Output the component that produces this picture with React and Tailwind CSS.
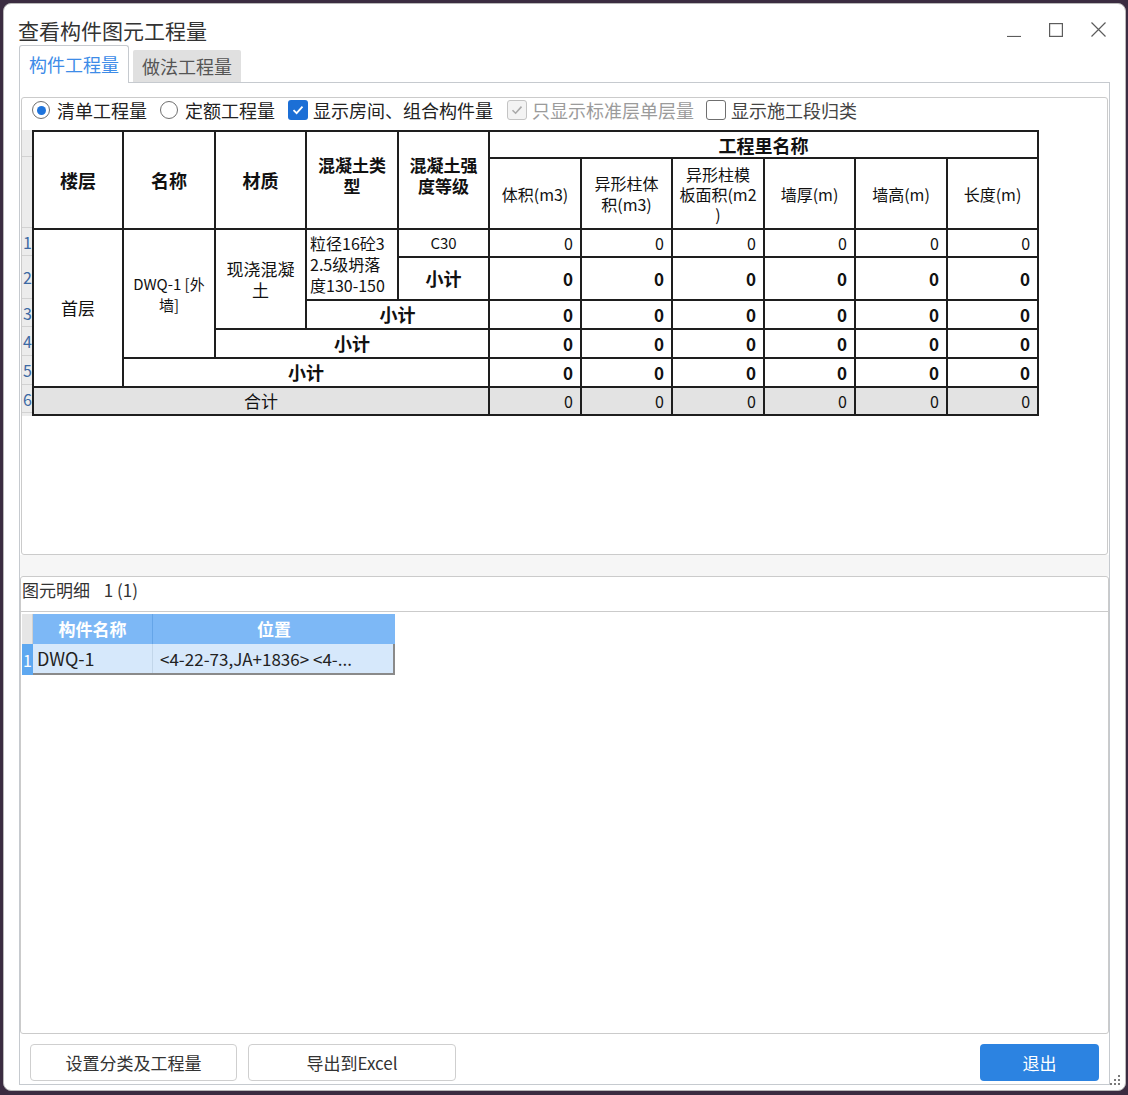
import React from 'react'

const font = "font-['Noto_Sans_CJK_SC','Noto_Sans',sans-serif]"

function Radio({ checked }) {
    return (
        <span className="w-[18px] h-[18px] rounded-full border border-[#6f6f6f] bg-white flex items-center justify-center shrink-0">
            {checked && <span className="w-[9px] h-[9px] rounded-full bg-[#1f74dc]" />}
        </span>
    )
}

function Check({ checked, disabled }) {
    if (disabled) {
        return (
            <span className="w-[20px] h-[20px] rounded-[3px] border border-[#c4c4c4] bg-[#f3f3f3] flex items-center justify-center shrink-0">
                <svg width="14" height="14" viewBox="0 0 14 14"><path d="M2.5 7.2 L5.6 10.2 L11.5 3.6" fill="none" stroke="#a9a9a9" strokeWidth="1.6" /></svg>
            </span>
        )
    }
    if (checked) {
        return (
            <span className="w-[20px] h-[20px] rounded-[3px] bg-[#1c6fd6] flex items-center justify-center shrink-0">
                <svg width="14" height="14" viewBox="0 0 14 14"><path d="M2.5 7.2 L5.6 10.2 L11.5 3.6" fill="none" stroke="#fff" strokeWidth="1.8" /></svg>
            </span>
        )
    }
    return <span className="block w-[20px] h-[20px] rounded-[3px] border border-[#6f6f6f] bg-white shrink-0" />
}

const b = 'border-2 border-[#1e1e1e]'
const zeros = [0, 0, 0, 0, 0, 0]

function Zero({ bold, gray }) {
    return (
        <td className={`${b} text-right pr-[7px] ${bold ? 'font-bold text-[17px]' : 'text-[16px]'} ${gray ? 'bg-[#e3e3e3]' : ''}`}>0</td>
    )
}

function QtyTable() {
    const heights = ['h-[28px]', 'h-[43px]', 'h-[28px]', 'h-[29px]', 'h-[29px]', 'h-[28px]']
    return (
        <div className="flex mt-[8px]">
            {/* row numbers */}
            <div className="w-[10px] flex flex-col bg-[#ececec] text-[16px] leading-none text-[#3d69a3] overflow-hidden">
                <div className="h-[27px] border-b border-[#d2d2d2]" />
                <div className="h-[71px] border-b border-[#d2d2d2]" />
                {heights.map((h, i) => (
                    <div key={i} className={`${h} border-b border-[#d2d2d2] flex items-center pl-[1px]`}>{i + 1}</div>
                ))}
            </div>
            <table className="border-collapse table-fixed w-[1007px] text-[#111]">
                <colgroup>
                    <col className="w-[90px]" /><col className="w-[92px]" /><col className="w-[91px]" /><col className="w-[92px]" />
                    <col className="w-[91px]" /><col className="w-[92px]" /><col className="w-[91px]" /><col className="w-[92px]" />
                    <col className="w-[91px]" /><col className="w-[92px]" /><col className="w-[91px]" />
                </colgroup>
                <thead>
                    <tr className="h-[27px]">
                        <th rowSpan={2} className={`${b} text-[18px] font-bold`}>楼层</th>
                        <th rowSpan={2} className={`${b} text-[18px] font-bold`}>名称</th>
                        <th rowSpan={2} className={`${b} text-[18px] font-bold`}>材质</th>
                        <th rowSpan={2} className={`${b} text-[17px] font-bold leading-[21px] pb-[10px]`}>混凝土类<br />型</th>
                        <th rowSpan={2} className={`${b} text-[17px] font-bold leading-[21px] pb-[10px]`}>混凝土强<br />度等级</th>
                        <th colSpan={6} className={`${b} text-[18px] font-bold leading-[22px]`}>工程里名称</th>
                    </tr>
                    <tr className="h-[71px] text-[16px] font-normal">
                        <th className={`${b} font-normal`}>体积(m3)</th>
                        <th className={`${b} font-normal leading-[21px]`}>异形柱体<br />积(m3)</th>
                        <th className={`${b} font-normal leading-[20px] whitespace-nowrap overflow-hidden`}>异形柱模<br />板面积(m2<br />)</th>
                        <th className={`${b} font-normal`}>墙厚(m)</th>
                        <th className={`${b} font-normal`}>墙高(m)</th>
                        <th className={`${b} font-normal`}>长度(m)</th>
                    </tr>
                </thead>
                <tbody>
                    <tr className="h-[28px]">
                        <td rowSpan={5} className={`${b} text-center text-[17px]`}>首层</td>
                        <td rowSpan={4} className={`${b} text-center text-[15px] leading-[21px] whitespace-nowrap overflow-hidden`}>DWQ-1 [外<br />墙]</td>
                        <td rowSpan={3} className={`${b} text-center text-[17px] leading-[21px]`}>现浇混凝<br />土</td>
                        <td rowSpan={2} className={`${b} text-left pl-[3px] text-[16px] leading-[21px] whitespace-nowrap overflow-hidden`}>粒径16砼3<br />2.5级坍落<br />度130-150</td>
                        <td className={`${b} text-center text-[15px]`}>C30</td>
                        {zeros.map((_, i) => <Zero key={i} />)}
                    </tr>
                    <tr className="h-[43px]">
                        <td className={`${b} text-center text-[18px] font-bold`}>小计</td>
                        {zeros.map((_, i) => <Zero key={i} bold />)}
                    </tr>
                    <tr className="h-[28px]">
                        <td colSpan={2} className={`${b} text-center text-[18px] font-bold`}>小计</td>
                        {zeros.map((_, i) => <Zero key={i} bold />)}
                    </tr>
                    <tr className="h-[29px]">
                        <td colSpan={3} className={`${b} text-center text-[18px] font-bold`}>小计</td>
                        {zeros.map((_, i) => <Zero key={i} bold />)}
                    </tr>
                    <tr className="h-[29px]">
                        <td colSpan={4} className={`${b} text-center text-[18px] font-bold`}>小计</td>
                        {zeros.map((_, i) => <Zero key={i} bold />)}
                    </tr>
                    <tr className="h-[28px]">
                        <td colSpan={5} className={`${b} text-center text-[17px] bg-[#e3e3e3]`}>合计</td>
                        {zeros.map((_, i) => <Zero key={i} gray />)}
                    </tr>
                </tbody>
            </table>
        </div>
    )
}

function DetailGrid() {
    return (
        <div className="pt-[2px] pl-[1px]">
            <div className="flex h-[30px]">
                <div className="w-[11px] bg-[#e6e6e6] border-r border-[#d0d0d0]" />
                <div className="w-[120px] bg-[#7db8f6] border-r border-[#65a5e8] flex items-center justify-center text-white font-bold text-[17px]">构件名称</div>
                <div className="w-[242px] bg-[#7db8f6] flex items-center justify-center text-white font-bold text-[17px]">位置</div>
            </div>
            <div className="flex h-[31px]">
                <div className="w-[11px] bg-[#5ea8f0] text-white text-[16px] flex items-center pl-[1px] overflow-hidden">1</div>
                <div className="flex border-b-2 border-r-2 border-[#8a8a8a] bg-[#d6e8fb]">
                    <div className="w-[120px] border-r border-[#c2d6ea] flex items-center pl-[4px] text-[18px] text-[#222]">DWQ-1</div>
                    <div className="w-[240px] flex items-center pl-[7px] text-[17px] text-[#222] whitespace-nowrap overflow-hidden">&lt;4-22-73,JA+1836&gt; &lt;4-...</div>
                </div>
            </div>
        </div>
    )
}

function App() {
    return (
        <div className={`w-[1128px] h-[1095px] bg-[#3b2c41] pt-[3px] pl-[3px] pr-[2px] pb-[4px] ${font}`}>
            <div className="relative h-full bg-white rounded-[8px] border border-[#b9b9b9] flex flex-col">
                {/* title bar */}
                <div className="h-[40px] flex items-start justify-between shrink-0">
                    <div className="pl-[14px] pt-[14px] text-[21px] leading-[24px] text-[#333]">查看构件图元工程量</div>
                    <div className="flex items-center gap-[28px] pt-[18px] pr-[19px]">
                        <svg width="14" height="14" viewBox="0 0 14 14"><path d="M0 13.5 H14" stroke="#5c5c5c" strokeWidth="1.2" /></svg>
                        <svg width="14" height="14" viewBox="0 0 14 14"><rect x="0.6" y="0.6" width="12.8" height="12.8" fill="none" stroke="#5c5c5c" strokeWidth="1.2" /></svg>
                        <svg width="15" height="15" viewBox="0 0 15 15"><path d="M0.5 0.5 L14.5 14.5 M14.5 0.5 L0.5 14.5" stroke="#5c5c5c" strokeWidth="1.2" /></svg>
                    </div>
                </div>

                {/* tabs */}
                <div className="flex items-end ml-[15px] h-[38px] shrink-0">
                    <div className="w-[110px] h-[38px] border border-b-0 border-[#c6cacf] rounded-t-[3px] bg-white relative top-[1px] flex items-center justify-center text-[18px] text-[#3d8ce8]">构件工程量</div>
                    <div className="w-[108px] h-[32px] ml-[4px] bg-[#e0e0e0] rounded-t-[2px] flex items-center justify-center text-[18px] text-[#555]">做法工程量</div>
                </div>

                {/* tab frame */}
                <div className="ml-[15px] w-[1091px] h-[1003px] border border-[#c6cacf] flex flex-col shrink-0">
                    <div className="mt-[14px] ml-[1px] mr-[1px] h-[458px] border border-[#cbcbcb] rounded-[3px] flex flex-col">
                        <div className="flex items-center h-[24px] pl-[10px] text-[18px] text-[#222] whitespace-nowrap">
                            <Radio checked />
                            <span className="ml-[7px]">清单工程量</span>
                            <span className="ml-[13px]"><Radio /></span>
                            <span className="ml-[7px]">定额工程量</span>
                            <span className="ml-[13px]"><Check checked /></span>
                            <span className="ml-[5px]">显示房间、组合构件量</span>
                            <span className="ml-[14px]"><Check checked disabled /></span>
                            <span className="ml-[5px] text-[#9b9b9b]">只显示标准层单层量</span>
                            <span className="ml-[12px]"><Check /></span>
                            <span className="ml-[5px] text-[#444]">显示施工段归类</span>
                        </div>
                        <QtyTable />
                    </div>

                    <div className="h-[21px] bg-[#f6f6f6]" />

                    <div className="h-[458px] border border-[#cbcbcb] rounded-[3px] flex flex-col">
                        <div className="h-[35px] pt-[1px] pl-[1px] text-[17px] leading-[24px] text-[#333] border-b border-[#cbcbcb] whitespace-nowrap">
                            图元明细 <span className="ml-[10px]">1 (1)</span>
                        </div>
                        <DetailGrid />
                    </div>

                    <div className="flex items-center justify-between mt-[10px] px-[10px]">
                        <div className="flex gap-[11px]">
                            <button className="w-[207px] h-[37px] border border-[#cfcfcf] rounded-[4px] bg-white text-[17px] text-[#333]">设置分类及工程量</button>
                            <button className="w-[208px] h-[37px] border border-[#cfcfcf] rounded-[4px] bg-white text-[17px] text-[#333]">导出到Excel</button>
                        </div>
                        <button className="w-[119px] h-[37px] rounded-[4px] bg-[#2c83e1] text-[17px] text-white">退出</button>
                    </div>
                </div>

                {/* resize grip */}
                <svg className="absolute right-[4px] bottom-[4px]" width="11" height="11" viewBox="0 0 11 11">
                    <rect x="8" y="0" width="2" height="2" fill="#7a7a7a" />
                    <rect x="4" y="4" width="2" height="2" fill="#7a7a7a" />
                    <rect x="8" y="4" width="2" height="2" fill="#7a7a7a" />
                    <rect x="0" y="8" width="2" height="2" fill="#7a7a7a" />
                    <rect x="4" y="8" width="2" height="2" fill="#7a7a7a" />
                    <rect x="8" y="8" width="2" height="2" fill="#7a7a7a" />
                </svg>
            </div>
        </div>
    )
}

export default App
